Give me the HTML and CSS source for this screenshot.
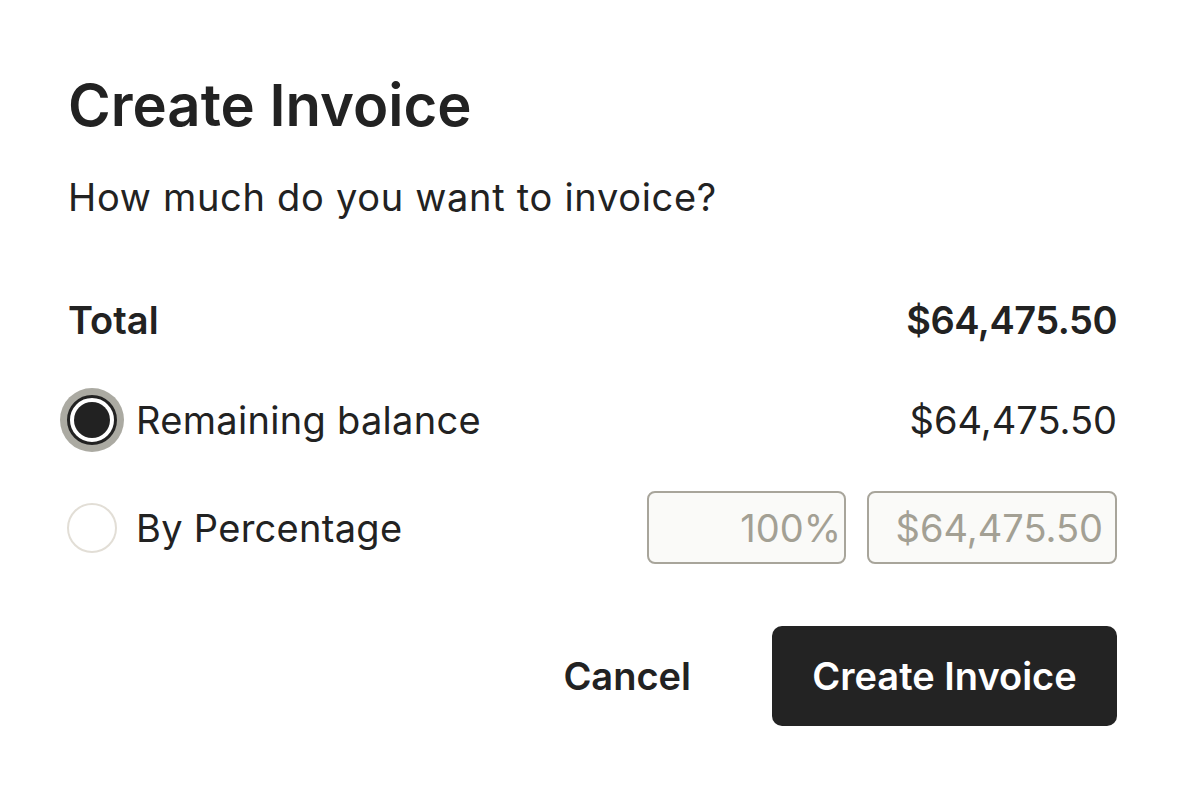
FILE: index.html
```html
<!DOCTYPE html>
<html lang="en">
<head>
<meta charset="utf-8">
<title>Create Invoice</title>
<link rel="stylesheet" href="styles.css">
</head>
<body>
<div class="dialog">
  <h1 class="title">Create Invoice</h1>
  <p class="subtitle">How much do you want to invoice?</p>

  <div class="row row-total">
    <span class="label-bold">Total</span>
    <span class="amount-bold">$64,475.50</span>
  </div>

  <div class="row row-remaining">
    <label class="option">
      <span class="radio radio-checked"><span class="dot"></span></span>
      <span class="option-text">Remaining balance</span>
    </label>
    <span class="amount">$64,475.50</span>
  </div>

  <div class="row row-percent">
    <label class="option">
      <span class="radio"></span>
      <span class="option-text">By Percentage</span>
    </label>
    <div class="fields">
      <div class="field field-pct">100%</div>
      <div class="field field-amt">$64,475.50</div>
    </div>
  </div>

  <div class="actions">
    <button class="btn btn-cancel" type="button">Cancel</button>
    <button class="btn btn-primary" type="button">Create Invoice</button>
  </div>
</div>
</body>
</html>
```

FILE: styles.css
```css
* { box-sizing: border-box; }

html, body {
  margin: 0;
  padding: 0;
  background: #ffffff;
}

body {
  font-family: Inter, "Liberation Sans", sans-serif;
  color: #222222;
}

.dialog {
  padding: 71px 71px 0 67px;
  display: flex;
  flex-direction: column;
}

.title {
  margin: 0 0 0 1px;
  font-size: 58px;
  line-height: 1.2;
  font-weight: 600;
  letter-spacing: 0;
}

.subtitle {
  margin: 34px 0 0 1px;
  font-size: 38px;
  line-height: 1.2;
  font-weight: 400;
  letter-spacing: 0.7px;
}

.row {
  display: flex;
  align-items: center;
  justify-content: space-between;
}

.row-total {
  height: 60px;
  margin-top: 70px;
  padding-left: 1px;
}

.row-remaining {
  height: 74px;
  margin-top: 33px;
}

.row-percent {
  height: 73px;
  margin-top: 34px;
}

.label-bold,
.amount-bold {
  font-size: 38px;
  font-weight: 600;
}

.amount-bold {
  letter-spacing: -0.5px;
}

.amount {
  font-size: 38px;
}

.option {
  display: flex;
  align-items: center;
  gap: 19px;
}

.option-text {
  font-size: 38px;
  letter-spacing: 0.3px;
}

.radio {
  width: 50px;
  height: 50px;
  border-radius: 50%;
  border: 2px solid #e2ded6;
  background: #ffffff;
  display: flex;
  align-items: center;
  justify-content: center;
  flex: none;
}

.radio-checked {
  border: 3px solid #222222;
  box-shadow: 0 0 0 7px #abaaa2;
}

.dot {
  width: 36px;
  height: 36px;
  border-radius: 50%;
  background: #222222;
}

.fields {
  display: flex;
  gap: 21px;
}

.field {
  height: 73px;
  border: 2px solid #a8a59b;
  border-radius: 8px;
  background: #fafaf8;
  color: #a3a094;
  font-size: 38px;
  display: flex;
  align-items: center;
  justify-content: flex-end;
}

.field-pct {
  width: 199px;
  padding-right: 3px;
}

.field-amt {
  width: 250px;
  padding-right: 12px;
}

.actions {
  display: flex;
  justify-content: flex-end;
  align-items: center;
  gap: 41px;
  margin-top: 62px;
}

.btn {
  font-family: inherit;
  font-size: 38px;
  font-weight: 600;
  border: none;
  cursor: pointer;
  height: 100px;
}

.btn-cancel {
  background: transparent;
  color: #222222;
  padding: 0 40px;
}

.btn-primary {
  width: 345px;
  background: #232323;
  color: #ffffff;
  border-radius: 10px;
}
```
